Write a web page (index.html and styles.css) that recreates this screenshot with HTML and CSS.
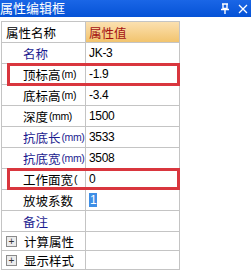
FILE: index.html
```html
<!DOCTYPE html>
<html lang="zh-CN">
<head>
    <meta charset="UTF-8">
    <title>属性编辑框</title>
    <link rel="stylesheet" href="styles.css">
</head>
<body>
    <div class="panel">
        <div class="titlebar">
            <span class="title">属性编辑框</span>
            <span class="tools">
                <svg width="10" height="11" viewBox="0 0 10 11">
                    <path d="M2 1h6M3 1v5M7 1v5M3 5.5h4M1 6.5h8M5 7v4" stroke="#fff" stroke-width="1.4" fill="none"/>
                </svg>
                <svg width="10" height="10" viewBox="0 0 10 10">
                    <path d="M1 1l8 8M9 1l-8 8" stroke="#fff" stroke-width="1.3" fill="none"/>
                </svg>
            </span>
        </div>
        <div class="sheet">
            <div class="row head">
                <div class="name">属性名称</div>
                <div class="val">属性值</div>
            </div>
            <div class="row">
                <div class="name ind blue">名称</div>
                <div class="val">JK-3</div>
            </div>
            <div class="row">
                <div class="name ind">顶标高<span class="unit">(m)</span></div>
                <div class="val">-1.9</div>
            </div>
            <div class="row">
                <div class="name ind">底标高<span class="unit">(m)</span></div>
                <div class="val">-3.4</div>
            </div>
            <div class="row">
                <div class="name ind">深度<span class="unit">(mm)</span></div>
                <div class="val">1500</div>
            </div>
            <div class="row">
                <div class="name ind blue">抗底长<span class="unit">(mm)</span></div>
                <div class="val">3533</div>
            </div>
            <div class="row">
                <div class="name ind blue">抗底宽<span class="unit">(mm)</span></div>
                <div class="val">3508</div>
            </div>
            <div class="row">
                <div class="name ind">工作面宽<span class="unit">(</span></div>
                <div class="val">0</div>
            </div>
            <div class="row">
                <div class="name ind">放坡系数</div>
                <div class="val"><span class="sel">1</span></div>
            </div>
            <div class="row">
                <div class="name ind blue">备注</div>
                <div class="val"></div>
            </div>
            <div class="row group">
                <div class="name"><span class="plus">+</span>计算属性</div>
                <div class="val"></div>
            </div>
            <div class="row group">
                <div class="name"><span class="plus">+</span>显示样式</div>
                <div class="val"></div>
            </div>

            <!-- highlight boxes drawn over the rows -->
            <div class="mark mark-top"></div>
            <div class="mark mark-work"></div>
        </div>
    </div>
</body>
</html>
```

FILE: styles.css
```css
body {
    margin: 0;
    padding: 0;
    background-color: #fff;
    font-family: "Liberation Sans", "Noto Sans CJK SC", sans-serif;
    font-size: 12.5px;
    color: #000;
}
.panel {
    width: 251px;
    height: 274px;
    overflow: hidden;
}
.titlebar {
    height: 17px;
    background: linear-gradient(#1a66e6, #0552d6);
    color: #fff;
    display: flex;
    align-items: center;
    justify-content: space-between;
}
.title {
    font-size: 13px;
    line-height: 17px;
}
.tools {
    display: flex;
    align-items: center;
    gap: 8px;
    margin-right: 3px;
}
.tools svg {
    display: block;
}
.sheet {
    position: relative;
    margin-top: 4px;
    margin-left: 1px;
    width: 177px;
    border-top: 1px solid #c4c4c4;
    border-left: 1px solid #c4c4c4;
    border-right: 1px solid #c4c4c4;
}
.row {
    display: flex;
    height: 20px;
    border-bottom: 1px solid #c4c4c4;
}
.row.group {
    height: 18px;
}
.name {
    width: 84px;
    flex-shrink: 0;
    padding-left: 4px;
    box-sizing: border-box;
    border-right: 1px solid #c4c4c4;
    display: flex;
    align-items: center;
    white-space: nowrap;
    overflow: hidden;
}
.name.ind {
    padding-left: 21px;
}
.unit {
    font-size: 10.5px;
    letter-spacing: -0.4px;
    margin-left: 1px;
}
.val {
    flex: 1;
    padding-left: 3px;
    display: flex;
    align-items: center;
    white-space: nowrap;
    font-size: 12px;
    letter-spacing: -0.3px;
}
.head .name {
    font-size: 12.5px;
}
.head .val {
    font-size: 12.5px;
    letter-spacing: 0;
    color: #a51212;
    background: linear-gradient(#fbe0b0, #f2c46e);
}
.blue {
    color: #1c1c90;
}
.sel {
    background-color: #3d8ee6;
    color: #fff;
    padding: 0 1px;
    line-height: 14px;
}
.plus {
    width: 9px;
    height: 9px;
    border: 1px solid #8a8a8a;
    background: #ececec;
    font-size: 10px;
    line-height: 9px;
    text-align: center;
    margin-right: 7px;
    color: #333;
}
.mark {
    position: absolute;
    left: 5px;
    width: 167px;
    border: 3px solid #d9363e;
}
.mark-top {
    top: 41px;
    height: 17px;
}
.mark-work {
    top: 146px;
    height: 16px;
}
```
